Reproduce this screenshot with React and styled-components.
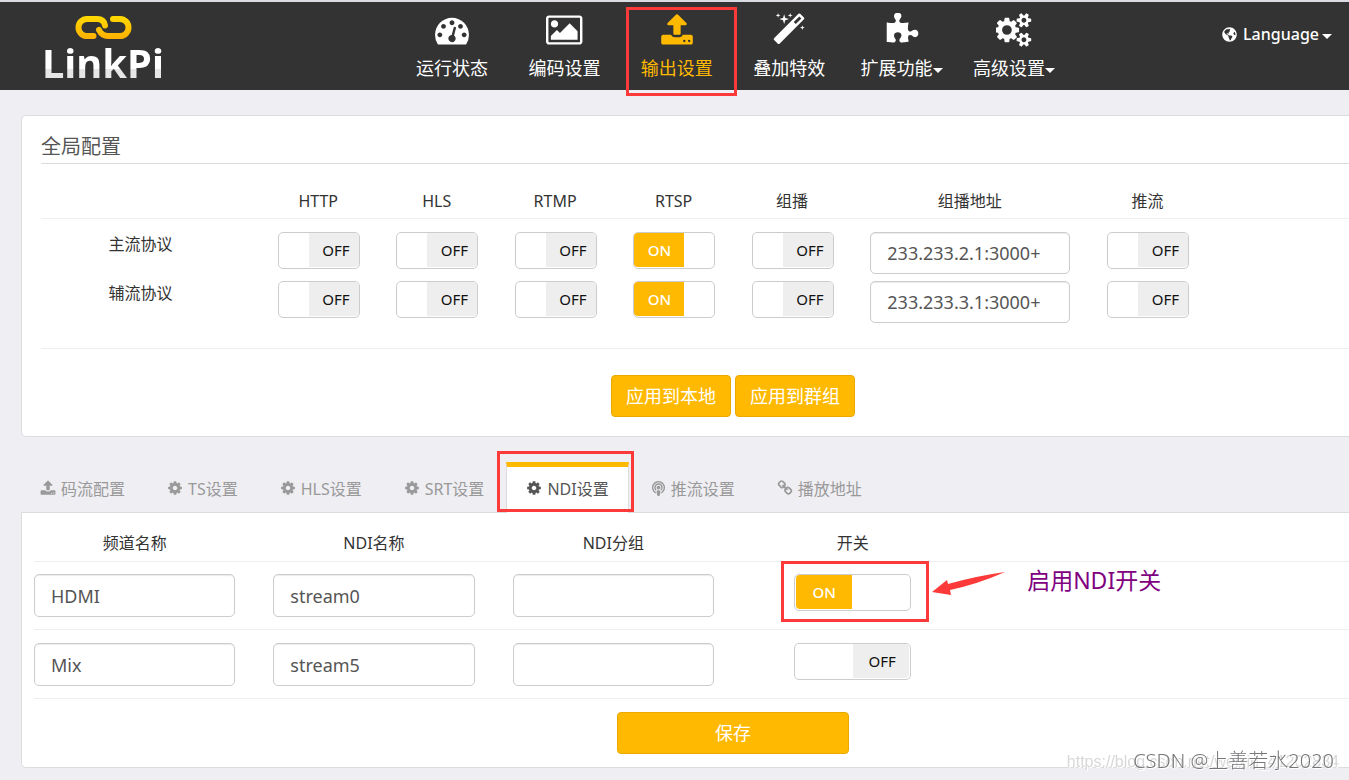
import React, { useState } from 'react';
import styled, { createGlobalStyle, css } from 'styled-components';
import { FaGlobeAmericas, FaPodcast } from 'react-icons/fa';

const GlobalStyle = createGlobalStyle`
  * {
    box-sizing: border-box;
  }
  body {
    margin: 0;
    background: #efeef3;
    color: #333;
    font-family: "Noto Sans", "Noto Sans CJK SC", sans-serif;
    font-size: 16px;
    line-height: 24px;
    overflow-x: hidden;
  }
  button, input {
    font-family: inherit;
  }
`;

const paths = {
  dashboard: "M384 1152q0-53-37.5-90.5t-90.5-37.5-90.5 37.5-37.5 90.5 37.5 90.5 90.5 37.5 90.5-37.5 37.5-90.5zm192-448q0-53-37.5-90.5t-90.5-37.5-90.5 37.5-37.5 90.5 37.5 90.5 90.5 37.5 90.5-37.5 37.5-90.5zm428 481l101-382q6-26-7.5-48.5t-38.5-29.5-48 6.5-30 39.5l-101 382q-60 5-107 43.5t-63 98.5q-20 77 20 146t117 89 146-20 89-117q16-60-6-117t-72-91zm660-33q0-53-37.5-90.5t-90.5-37.5-90.5 37.5-37.5 90.5 37.5 90.5 90.5 37.5 90.5-37.5 37.5-90.5zm-640-640q0-53-37.5-90.5t-90.5-37.5-90.5 37.5-37.5 90.5 37.5 90.5 90.5 37.5 90.5-37.5 37.5-90.5zm448 192q0-53-37.5-90.5t-90.5-37.5-90.5 37.5-37.5 90.5 37.5 90.5 90.5 37.5 90.5-37.5 37.5-90.5zm320 448q0 261-141 483-19 29-54 29h-1402q-35 0-54-29-141-221-141-483 0-182 71-348t191-286 286-191 348-71 348 71 286 191 191 286 71 348z",
  image: "M576 576q0 80-56 136t-136 56-136-56-56-136 56-136 136-56 136 56 56 136zm1024 384v448h-1408v-192l320-320 160 160 512-512zm96-704h-1600q-13 0-22.5 9.5t-9.5 22.5v1216q0 13 9.5 22.5t22.5 9.5h1600q13 0 22.5-9.5t9.5-22.5v-1216q0-13-9.5-22.5t-22.5-9.5zm160 32v1216q0 66-47 113t-113 47h-1600q-66 0-113-47t-47-113v-1216q0-66 47-113t113-47h1600q66 0 113 47t47 113z",
  upload: "M1344 1472q0-26-19-45t-45-19-45 19-19 45 19 45 45 19 45-19 19-45zm256 0q0-26-19-45t-45-19-45 19-19 45 19 45 45 19 45-19 19-45zm128-224v320q0 40-28 68t-68 28h-1472q-40 0-68-28t-28-68v-320q0-40 28-68t68-28h427q21 56 70.5 92t110.5 36h256q61 0 110.5-36t70.5-92h427q40 0 68 28t28 68zm-325-648q-17 40-59 40h-256v448q0 26-19 45t-45 19h-256q-26 0-45-19t-19-45v-448h-256q-42 0-59-40-17-39 14-69l448-448q18-19 45-19t45 19l448 448q31 30 14 69z",
  magic: "M1254 581l293-293-107-107-293 293zm447-293q0 27-18 45l-1286 1286q-18 18-45 18t-45-18l-198-198q-18-18-18-45t18-45l1286-1286q18-18 45-18t45 18l198 198q18 18 18 45zm-1351-190l98 30-98 30-30 98-30-98-98-30 98-30 30-98zm350 162l196 60-196 60-60 196-60-196-196-60 196-60 60-196zm930 478l98 30-98 30-30 98-30-98-98-30 98-30 30-98zm-640-640l98 30-98 30-30 98-30-98-98-30 98-30 30-98z",
  puzzle: "M1755 1083q0 81-44.5 135t-123.5 54q-41 0-77.5-17.5t-59-38-56.5-38-71-17.5q-110 0-110 124 0 39 16 115t15 115v5q-22 0-33 1-34 3-97.5 11.5t-115.5 13.5-98 5q-61 0-103-26.5t-42-83.5q0-37 17.5-71t38-56.5 38-59 17.5-77.5q0-79-54-123.5t-135-44.5q-84 0-143 45.5t-59 127.5q0 43 15 83t33.5 64.5 33.5 53 15 50.5q0 45-46 89-37 35-117 35-95 0-245-24-9-2-27.5-4t-27.5-4l-13-2q-1 0-3-1-2 0-2-1v-1024q2 1 17.5 3.5t34 5 21.5 3.5q150 24 245 24 80 0 117-35 46-44 46-89 0-22-15-50.5t-33.5-53-33.5-64.5-15-83q0-82 59-127.5t144-45.5q80 0 134 44.5t54 123.5q0 41-17.5 77.5t-38 59-38 56.5-17.5 71q0 57 42 83.5t103 26.5q64 0 180-15t163-17v2q-1 2-3.5 17.5t-5 34-3.5 21.5q-24 150-24 245 0 80 35 117 44 46 89 46 22 0 50.5-15t53-33.5 64.5-33.5 83-15q82 0 127.5 59t45.5 143z",
  cogs: "M832 896q0-106-75-181t-181-75-181 75-75 181 75 181 181 75 181-75 75-181zm768 512q0-52-38-90t-90-38-90 38-38 90q0 53 37.5 90.5t90.5 37.5 90.5-37.5 37.5-90.5zm0-1024q0-52-38-90t-90-38-90 38-38 90q0 53 37.5 90.5t90.5 37.5 90.5-37.5 37.5-90.5zm-384 421v185q0 10-7 19.5t-16 10.5l-155 24q-11 35-32 76 34 48 90 115 7 11 7 20 0 12-7 19-23 30-82.5 89.5t-78.5 59.5q-11 0-21-7l-115-90q-37 19-77 31-11 108-23 155-7 24-30 24h-186q-11 0-20-7.5t-10-17.5l-23-153q-34-10-75-31l-118 89q-7 7-20 7-11 0-21-8-144-133-144-160 0-9 7-19 10-14 41-53t47-61q-23-44-35-82l-152-24q-10-1-17-9.5t-7-19.5v-185q0-10 7-19.5t16-10.5l155-24q11-35 32-76-34-48-90-115-7-11-7-20 0-12 7-20 22-30 82-89t79-59q11 0 21 7l115 90q34-18 77-32 11-108 23-154 7-24 30-24h186q11 0 20 7.5t10 17.5l23 153q34 10 75 31l118-89q8-7 20-7 11 0 21 8 144 133 144 160 0 8-7 19-12 16-42 54t-45 60q23 48 34 82l152 23q10 2 17 10.5t7 19.5zm640 533v140q0 16-149 31-12 27-30 52 51 113 51 138 0 4-4 7-122 71-124 71-8 0-46-47t-52-68q-20 2-30 2t-30-2q-14 21-52 68t-46 47q-2 0-124-71-4-3-4-7 0-25 51-138-18-25-30-52-149-15-149-31v-140q0-16 149-31 13-29 30-52-51-113-51-138 0-4 4-7 4-2 35-20t59-34 30-16q8 0 46 46.5t52 67.5q20-2 30-2t30 2q51-71 92-112l6-2q4 0 124 70 4 3 4 7 0 25-51 138 17 23 30 52 149 15 149 31zm0-1024v140q0 16-149 31-12 27-30 52 51 113 51 138 0 4-4 7-122 71-124 71-8 0-46-47t-52-68q-20 2-30 2t-30-2q-14 21-52 68t-46 47q-2 0-124-71-4-3-4-7 0-25 51-138-18-25-30-52-149-15-149-31v-140q0-16 149-31 13-29 30-52-51-113-51-138 0-4 4-7 4-2 35-20t59-34 30-16q8 0 46 46.5t52 67.5q20-2 30-2t30 2q51-71 92-112l6-2q4 0 124 70 4 3 4 7 0 25-51 138 17 23 30 52 149 15 149 31z",
  cog: "M1152 896q0-106-75-181t-181-75-181 75-75 181 75 181 181 75 181-75 75-181zm512-109v222q0 12-8 23t-20 13l-185 28q-19 54-39 91 35 50 107 138 10 12 10 25t-9 23q-27 37-99 108t-94 71q-12 0-26-9l-138-108q-44 23-91 38-16 136-29 186-7 28-36 28h-222q-14 0-24.5-8.5t-11.5-21.5l-28-184q-49-16-90-37l-141 107q-10 9-25 9-14 0-25-11-126-114-165-168-7-10-7-23 0-12 8-23 15-21 51-66.5t54-70.5q-27-50-41-99l-183-27q-13-2-21-12.5t-8-23.5v-222q0-12 8-23t19-13l186-28q14-46 39-92-40-57-107-138-10-12-10-24 0-10 9-23 26-36 98.5-107.5t94.5-71.5q13 0 26 10l138 107q44-23 91-38 16-136 29-186 7-28 36-28h222q14 0 24.5 8.5t11.5 21.5l28 184q49 16 90 37l142-107q9-9 24-9 13 0 25 10 129 119 165 170 7 8 7 22 0 12-8 23-15 21-51 66.5t-54 70.5q26 50 41 98l183 28q13 2 21 12.5t8 23.5z",
  chain: "M1520 1216q0-40-28-68l-208-208q-28-28-68-28-42 0-72 32 3 3 19 18.5t21.5 21.5 15 19 13 25.5 3.5 27.5q0 40-28 68t-68 28q-15 0-27.5-3.5t-25.5-13-19-15-21.5-21.5-18.5-19q-33 31-33 73 0 40 28 68l206 207q27 27 68 27 40 0 68-26l147-146q28-28 28-67zm-703-705q0-40-28-68l-206-207q-28-28-68-28-39 0-68 27l-147 146q-28 28-28 67 0 40 28 68l208 208q27 27 68 27 42 0 72-31-3-3-19-18.5t-21.5-21.5-15-19-13-25.5-3.5-27.5q0-40 28-68t68-28q15 0 27.5 3.5t25.5 13 19 15 21.5 21.5 18.5 19q33-31 33-73zm895 705q0 120-85 203l-147 146q-83 83-203 83-121 0-204-85l-206-207q-83-83-83-203 0-123 88-209l-88-88q-86 88-208 88-120 0-204-84l-208-208q-84-84-84-204t85-203l147-146q83-83 203-83 121 0 204 85l206 207q83 83 83 203 0 123-88 209l88 88q86-88 208-88 120 0 204 84l208 208q84 84 84 204z",
};

const boxes = {
  image: '-64 0 1920 1792',
  cogs: '0 0 1920 1792',
};

const Svg = styled.svg`
  height: ${(p) => p.$size}px;
  fill: currentColor;
  flex: none;
`;

const Icon = ({ name, size }) => (
  <Svg $size={size} viewBox={boxes[name] || '0 0 1792 1792'} aria-hidden="true">
    <path d={paths[name]} />
  </Svg>
);

// the console is laid out wider than the window and runs off its right edge
const Page = styled.div`
  width: calc(100% + 117px);
  border-top: 2px solid #dadbe3;
`;

const Header = styled.header`
  display: grid;
  grid-template-columns: 1fr 46% 1fr;
  height: 88px;
  background: #333;
  color: #fff;
`;

const Logo = styled.a`
  display: flex;
  flex-direction: column;
  align-items: center;
  justify-self: start;
  margin-left: 42px;
  padding-top: 11px;
  text-decoration: none;
`;

const LogoText = styled.span`
  font-size: 40px;
  font-weight: 700;
  line-height: 44px;
  color: transparent;
  background: linear-gradient(#fff 64%, #e6e6e6 64%);
  background-clip: text;
`;

const Nav = styled.nav`
  display: grid;
  grid-template-columns: repeat(6, 1fr);
`;

const NavItem = styled.a`
  position: relative;
  display: flex;
  flex-direction: column;
  align-items: center;
  gap: 9px;
  padding-top: 11px;
  font-size: 18px;
  color: ${(p) => (p.$active ? '#ffb900' : '#fff')};
  text-decoration: none;
`;

const Caption = styled.span`
  display: flex;
  align-items: center;
`;

const Caret = styled.i`
  margin-top: 4px;
  border: 5px solid transparent;
  border-top-color: currentColor;
  border-bottom: 0;
`;

const Language = styled.button`
  display: flex;
  align-items: center;
  justify-self: end;
  align-self: start;
  margin: 20px 134px 0 0;
  padding: 0;
  border: 0;
  background: none;
  color: #fff;
  font-size: 16px;
  font-weight: 500;
  line-height: 24px;

  svg {
    margin-right: 6px;
  }
  i {
    margin-left: 3px;
  }
`;

// red marker drawn over a part of the page
const Marker = styled.span`
  position: absolute;
  inset: ${(p) => p.$inset};
  border: 3px solid #fc3a3a;
  pointer-events: none;
  z-index: 2;
`;

const Card = styled.section`
  margin: 0 22px 0 21px;
  border: 1px solid #dcdcdc;
  border-radius: ${(p) => (p.$tabbed ? '0 0 5px 5px' : '5px')};
  background: #fff;
`;

const GlobalCard = styled(Card)`
  margin-top: 25px;
  padding: 16px 18px 19px 19px;
`;

const Title = styled.h2`
  margin: 0;
  padding-bottom: 1px;
  border-bottom: 1px solid #dcdcdc;
  color: #555;
  font-size: 20px;
  font-weight: 400;
  line-height: 30px;
`;

const Table = styled.table`
  width: 100%;
  table-layout: fixed;
  border-collapse: collapse;

  th, td {
    padding: 0;
    font-weight: 400;
    text-align: center;
    vertical-align: top;
  }
`;

const Col = styled.col`
  width: ${(p) => p.$w};
`;

const ProtocolTable = styled(Table)`
  margin-top: 18px;

  thead th {
    padding: 7px 0 5px;
    border-bottom: 1px solid #eee;
  }
  tbody td, tbody th {
    padding: 13px 18px 0 19px;
  }
  tbody th {
    padding-right: 38px;
  }
  tbody tr + tr td, tbody tr + tr th {
    padding-top: 7px;
  }
`;

const ProtocolActions = styled.div`
  display: flex;
  justify-content: center;
  gap: 4px;
  margin-top: 25px;
  padding-top: 26px;
  border-top: 1px solid #eee;
`;

const Button = styled.button`
  width: ${(p) => (p.$wide ? '232px' : '120px')};
  height: 42px;
  padding: 0 0 2px;
  border: 1px solid #eba900;
  border-radius: 4px;
  background: #ffb900;
  color: #fff;
  font-size: 18px;
`;

const TextInput = styled.input`
  display: block;
  width: 100%;
  height: ${(p) => (p.$short ? '42px' : '43px')};
  padding: 0 16px;
  border: 1px solid #ccc;
  border-radius: 5px;
  background: #fff;
  box-shadow: inset 0 1px 1px rgba(0, 0, 0, 0.08);
  color: #555;
  font-size: 18px;
`;

const SwitchBox = styled.label`
  position: relative;
  display: inline-flex;
  justify-content: ${(p) => (p.$on ? 'flex-start' : 'flex-end')};
  width: ${(p) => (p.$wide ? '117px' : '82px')};
  height: 37px;
  padding: ${(p) => (p.$wide ? '0 1px 1px' : '0 0 1px')};
  border: 1px solid #ccc;
  border-radius: 5px;
  background: #fff;
  vertical-align: top;

  input {
    position: absolute;
    inset: 0;
    margin: 0;
    opacity: 0;
  }
`;

const Handle = styled.span`
  width: ${(p) => (p.$wide ? '56px' : '50px')};
  font-size: 15px;
  line-height: 35px;
  text-align: center;
  ${(p) => p.$on ? css`
    background: #ffb900;
    border-radius: 4px 0 0 4px;
    color: #fff;
    font-weight: 500;
  ` : css`
    padding-left: ${p.$wide ? 2 : 4}px;
    background: #eee;
    border-radius: 0 4px 4px 0;
    color: #111;
  `}
`;

const Switch = ({ initial = false, wide, label }) => {
  const [on, setOn] = useState(initial);
  return (
    <SwitchBox $on={on} $wide={wide}>
      <input type="checkbox" aria-label={label} checked={on} onChange={() => setOn(!on)} />
      <Handle $on={on} $wide={wide}>{on ? 'ON' : 'OFF'}</Handle>
    </SwitchBox>
  );
};

const Tabs = styled.div`
  display: flex;
  gap: 2px;
  margin: 25px 20px 0;
`;

const Tab = styled.button`
  position: relative;
  display: flex;
  align-items: center;
  gap: 5px;
  height: 51px;
  margin-bottom: -1px;
  padding: 0 19px;
  border: 1px solid transparent;
  border-bottom: 0;
  background: none;
  color: #999;
  font-size: 16px;
  ${(p) => p.$active && css`
    padding-bottom: 4px;
    border-color: #dcdcdc;
    border-top: 5px solid #ffb900;
    background: #fff;
    color: #555;
    z-index: 1;
  `}
`;

const NdiCard = styled(Card)`
  padding: 18px 11px 13px 12px;
`;

const NdiTable = styled(Table)`
  th, td {
    padding: 0 19px;
  }
  th:first-child, td:first-child {
    padding-left: 0;
  }
  tr {
    border-bottom: 1px solid #eee;
  }
  thead th {
    padding-bottom: 6px;
  }
  tbody td {
    padding-top: 12px;
    padding-bottom: 12px;
  }
  tbody tr + tr td {
    padding-top: 13px;
  }
`;

const SwitchSpot = styled.div`
  position: relative;
  display: inline-block;
  vertical-align: top;
`;

const Note = styled.div`
  position: absolute;
  left: 138px;
  top: -12px;
  display: flex;
  align-items: flex-start;
  gap: 21px;
  color: #800080;
  font-size: 23px;
  line-height: 36px;
  white-space: nowrap;

  svg {
    margin-top: 9px;
  }
`;

const SaveRow = styled.div`
  display: flex;
  justify-content: center;
  margin-top: 13px;
`;

const Watermark = styled.div`
  position: fixed;
  right: ${(p) => (p.$faint ? '10px' : '15px')};
  bottom: ${(p) => (p.$faint ? '5px' : '6px')};
  color: ${(p) => (p.$faint ? '#d8d8da' : '#77777a')};
  font-family: ${(p) => (p.$faint ? '"Liberation Sans"' : '"Noto Sans"')}, "Noto Sans CJK SC", sans-serif;
  font-size: ${(p) => (p.$faint ? '16px' : '20px')};
  font-weight: 300;
  line-height: 26px;
  text-shadow: 1px 1px 0 #fff;
  z-index: 3;
`;

const navItems = [
  { icon: 'dashboard', text: '运行状态' },
  { icon: 'image', text: '编码设置' },
  { icon: 'upload', text: '输出设置', active: true },
  { icon: 'magic', text: '叠加特效' },
  { icon: 'puzzle', text: '扩展功能', menu: true },
  { icon: 'cogs', text: '高级设置', menu: true },
];

const protocols = [
  { name: '主流协议', address: '233.233.2.1:3000+' },
  { name: '辅流协议', address: '233.233.3.1:3000+' },
];

const kinds = ['HTTP', 'HLS', 'RTMP', 'RTSP', '组播'];

const tabs = [
  { icon: 'upload', text: '码流配置' },
  { icon: 'cog', text: 'TS设置' },
  { icon: 'cog', text: 'HLS设置' },
  { icon: 'cog', text: 'SRT设置' },
  { icon: 'cog', text: 'NDI设置', active: true },
  { icon: 'podcast', text: '推流设置' },
  { icon: 'chain', text: '播放地址' },
];

const channels = [
  { name: 'HDMI', stream: 'stream0', on: true },
  { name: 'Mix', stream: 'stream5', on: false },
];

const App = () => {
  return (
    <>
      <GlobalStyle />
      <Page>
        <Header>
          <Logo href="#">
            <svg width="58" height="28" viewBox="73 13 58 28" fill="none" stroke="url(#gold)" strokeWidth="6" strokeLinecap="round">
              <defs>
                <linearGradient id="gold" gradientUnits="userSpaceOnUse" x1="0" y1="15" x2="0" y2="40">
                  <stop offset="0" stopColor="#ffdc00" />
                  <stop offset="1" stopColor="#ffae00" />
                </linearGradient>
              </defs>
              <path d="M92.500 36H86a8.500 8.500 0 0 1 0-17H96q7 0 8 6.500" />
              <path d="M112 19H119a8.500 8.500 0 0 1 0 17H107q-6 0-9-6" />
            </svg>
            <LogoText>LinkPi</LogoText>
          </Logo>
          <Nav>
            {navItems.map((n) => (
              <NavItem key={n.text} href="#" $active={n.active}>
                <Icon name={n.icon} size={34} />
                <Caption>{n.text}{n.menu && <Caret />}</Caption>
                {n.active && <Marker $inset="5px -4px -6px 5px" />}
              </NavItem>
            ))}
          </Nav>
          <Language><FaGlobeAmericas size={15} />Language<Caret /></Language>
        </Header>

        <GlobalCard>
          <Title>全局配置</Title>
          <ProtocolTable>
            <colgroup>
              <Col $w="15.75%" />
              {kinds.map((k) => <Col key={k} $w="8.56%" />)}
              <Col $w="17.13%" />
              <Col $w="8.56%" />
              <Col />
            </colgroup>
            <thead>
              <tr>
                <th />
                {kinds.map((k) => <th key={k}>{k}</th>)}
                <th>组播地址</th>
                <th>推流</th>
                <th />
              </tr>
            </thead>
            <tbody>
              {protocols.map((p) => (
                <tr key={p.name}>
                  <th scope="row">{p.name}</th>
                  {kinds.map((k) => (
                    <td key={k}><Switch initial={k === 'RTSP'} label={`${p.name} ${k}`} /></td>
                  ))}
                  <td><TextInput $short defaultValue={p.address} aria-label={`${p.name} 组播地址`} /></td>
                  <td><Switch label={`${p.name} 推流`} /></td>
                  <td />
                </tr>
              ))}
            </tbody>
          </ProtocolTable>
          <ProtocolActions>
            <Button>应用到本地</Button>
            <Button>应用到群组</Button>
          </ProtocolActions>
        </GlobalCard>

        <Tabs role="tablist">
          {tabs.map((t) => (
            <Tab key={t.text} role="tab" aria-selected={!!t.active} $active={t.active}>
              {t.icon === 'podcast' ? <FaPodcast size={15} /> : <Icon name={t.icon} size={16} />}
              {t.text}
              {t.active && <Marker $inset="-16px -6px 1px -10px" />}
            </Tab>
          ))}
        </Tabs>
        <NdiCard $tabbed>
          <NdiTable>
            <colgroup>
              <Col $w="15.76%" />
              <Col $w="17.12%" />
              <Col $w="17.12%" />
              <Col $w="17.12%" />
              <Col />
            </colgroup>
            <thead>
              <tr>
                <th>频道名称</th>
                <th>NDI名称</th>
                <th>NDI分组</th>
                <th>开关</th>
                <th />
              </tr>
            </thead>
            <tbody>
              {channels.map((c) => (
                <tr key={c.name}>
                  <td><TextInput defaultValue={c.name} aria-label="频道名称" /></td>
                  <td><TextInput defaultValue={c.stream} aria-label="NDI名称" /></td>
                  <td><TextInput defaultValue="" aria-label="NDI分组" /></td>
                  <td>
                    <SwitchSpot>
                      <Switch wide initial={c.on} label={`${c.name} 开关`} />
                      {c.on && (
                        <>
                          <Marker $inset="-13px -18px -11px -13px" />
                          <Note>
                            <svg width="74" height="26" viewBox="0 0 74 26" fill="#fc3a3a">
                              <path d="M0 21L15 9L16 13Q44 5 73 1Q46 13 18 19L19 24Z" />
                            </svg>
                            启用NDI开关
                          </Note>
                        </>
                      )}
                    </SwitchSpot>
                  </td>
                  <td />
                </tr>
              ))}
            </tbody>
          </NdiTable>
          <SaveRow>
            <Button $wide>保存</Button>
          </SaveRow>
        </NdiCard>
      </Page>
      <Watermark $faint>https://blog.csdn.net/weixin_41202834</Watermark>
      <Watermark>CSDN @上善若水2020</Watermark>
    </>
  );
};

export default App;
